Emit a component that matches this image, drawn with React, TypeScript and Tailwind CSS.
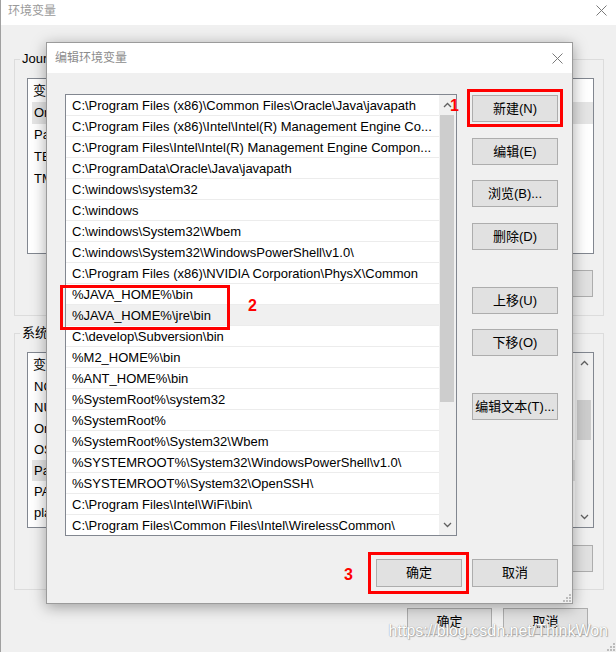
import React from 'react';

const paths = [
  'C:\\Program Files (x86)\\Common Files\\Oracle\\Java\\javapath',
  'C:\\Program Files (x86)\\Intel\\Intel(R) Management Engine Co...',
  'C:\\Program Files\\Intel\\Intel(R) Management Engine Compon...',
  'C:\\ProgramData\\Oracle\\Java\\javapath',
  'C:\\windows\\system32',
  'C:\\windows',
  'C:\\windows\\System32\\Wbem',
  'C:\\windows\\System32\\WindowsPowerShell\\v1.0\\',
  'C:\\Program Files (x86)\\NVIDIA Corporation\\PhysX\\Common',
  '%JAVA_HOME%\\bin',
  '%JAVA_HOME%\\jre\\bin',
  'C:\\develop\\Subversion\\bin',
  '%M2_HOME%\\bin',
  '%ANT_HOME%\\bin',
  '%SystemRoot%\\system32',
  '%SystemRoot%',
  '%SystemRoot%\\System32\\Wbem',
  '%SYSTEMROOT%\\System32\\WindowsPowerShell\\v1.0\\',
  '%SYSTEMROOT%\\System32\\OpenSSH\\',
  'C:\\Program Files\\Intel\\WiFi\\bin\\',
  'C:\\Program Files\\Common Files\\Intel\\WirelessCommon\\',
];

const userVars = ['OneDrive', 'Path', 'TEMP', 'TMP'];
const sysVars = ['NODE_PATH', 'NUMBER_OF_PROCESSORS', 'OnlineServices', 'OS', 'Path', 'PATHEXT', 'platformcode'];

const Chevron = ({ dir }: { dir: 'up' | 'down' }) => (
  <svg width="9" height="6" viewBox="0 0 9 6" className="block">
    <path
      d={dir === 'up' ? 'M1 5L4.5 1.5L8 5' : 'M1 1L4.5 4.5L8 1'}
      fill="none"
      stroke="#606060"
      strokeWidth="1.3"
    />
  </svg>
);

const CloseX = () => (
  <svg width="11" height="11" viewBox="0 0 11 11" className="block">
    <path d="M0.5 0.5L10.5 10.5M10.5 0.5L0.5 10.5" stroke="#7a7a7a" strokeWidth="1" />
  </svg>
);

// la rejilla de redimensionar de Windows
const Grip = () => (
  <svg width="9" height="9" viewBox="0 0 9 9" className="block">
    {[
      [7, 1],
      [4, 4],
      [7, 4],
      [1, 7],
      [4, 7],
      [7, 7],
    ].map(([x, y]) => (
      <rect key={`${x}-${y}`} x={x} y={y} width="2" height="2" fill="#bcbcbc" />
    ))}
  </svg>
);

const WinButton = ({ children, className = '' }: { children: React.ReactNode; className?: string }) => (
  <div
    className={`flex items-center justify-center border border-[#adadad] bg-[#e1e1e1] text-[13px] text-black ${className}`}
  >
    {children}
  </div>
);

const GroupBox = ({
  legend,
  children,
  className = '',
}: {
  legend: string;
  children: React.ReactNode;
  className?: string;
}) => (
  <div className={`relative border border-[#dcdcdc] pl-[12px] pr-[9px] ${className}`}>
    <span className="absolute -top-[9px] left-[5px] bg-[#f0f0f0] px-[2px] leading-[16px]">{legend}</span>
    {children}
  </div>
);

const BgList = ({
  rows,
  selected,
  rowClass,
  scroll,
}: {
  rows: string[];
  selected: number;
  rowClass: string;
  scroll?: boolean;
}) => (
  <div className="flex h-[176px] border border-[#828790] bg-white">
    <div className="flex-1 overflow-hidden">
      <div className="h-[23px] pl-[5px] leading-[23px]">变量</div>
      {rows.map((r, i) => (
        <div
          key={r}
          className={`ml-[4px] whitespace-nowrap pl-[2px] ${rowClass} ${i === selected ? 'bg-[#e5e5e5]' : ''}`}
        >
          {r}
        </div>
      ))}
    </div>
    {scroll && (
      <div className="flex w-[18px] flex-col bg-[#f0f0f0]">
        <div className="flex h-[20px] items-center justify-center">
          <Chevron dir="up" />
        </div>
        <div className="mx-[2px] mt-[27px] h-[40px] bg-[#cdcdcd]" />
        <div className="flex-1" />
        <div className="flex h-[20px] items-center justify-center">
          <Chevron dir="down" />
        </div>
      </div>
    )}
  </div>
);

export default function App() {
  return (
    <div className="relative h-[652px] w-[616px] overflow-hidden border-l border-[#a0a0a0] bg-[#f0f0f0] font-['Liberation_Sans','Noto_Sans_CJK_SC',sans-serif] text-[13px] text-black">
      {/* Ventana de fondo: 环境变量 */}
      <div className="flex h-[25px] items-center justify-between bg-white pb-[4px] pl-[7px] pr-[9px]">
        <span className="text-[12px] text-[#9a9a9a]">环境变量</span>
        <CloseX />
      </div>

      <div className="flex flex-col pl-[13px] pr-[12px]">
        <GroupBox legend="JourneyLee 的用户变量(U)" className="mt-[34px] pb-[18px] pt-[18px]">
          <BgList rows={userVars} selected={0} rowClass="h-[22px] leading-[22px]" />
          <div className="mt-[16px] flex justify-end gap-[10px] pr-[1px]">
            <WinButton className="h-[27px] w-[86px]">新建(N)...</WinButton>
            <WinButton className="h-[27px] w-[86px]">编辑(E)...</WinButton>
            <WinButton className="h-[27px] w-[86px]">删除(D)</WinButton>
          </div>
        </GroupBox>

        <GroupBox legend="系统变量(S)" className="mt-[17px] pb-[17px] pt-[18px]">
          <BgList rows={sysVars} selected={4} rowClass="h-[21px] leading-[21px]" scroll />
          <div className="mt-[17px] flex justify-end gap-[10px] pr-[1px]">
            <WinButton className="h-[27px] w-[86px]">新建(W)...</WinButton>
            <WinButton className="h-[27px] w-[86px]">编辑(I)...</WinButton>
            <WinButton className="h-[27px] w-[86px]">删除(L)</WinButton>
          </div>
        </GroupBox>

        <div className="mr-[16px] mt-[18px] flex justify-end gap-[11px]">
          <WinButton className="h-[27px] w-[85px]">确定</WinButton>
          <WinButton className="h-[27px] w-[85px]">取消</WinButton>
        </div>
      </div>

      <div className="absolute bottom-[1px] right-[1px]">
        <Grip />
      </div>

      {/* Marca de agua */}
      <div className="pointer-events-none absolute bottom-[9px] right-[8px] text-[16px] text-white [text-shadow:0_0_1px_#8a8a8a,1px_1px_1px_#b0b0b0]">
        https://blog.csdn.net/ThinkWon
      </div>

      {/* Diálogo: 编辑环境变量 */}
      <div className="absolute left-[45px] top-[42px] flex h-[562px] w-[527px] flex-col border border-[#9b9b9b] bg-[#f0f0f0] shadow-[0_3px_14px_rgba(0,0,0,0.35)]">
        <div className="flex h-[30px] items-center justify-between bg-white pl-[8px] pr-[9px]">
          <span className="text-[12px] text-[#8c8c8c]">编辑环境变量</span>
          <CloseX />
        </div>

        <div className="flex pl-[18px] pt-[21px]">
          <div className="relative flex h-[442px] w-[392px] border border-[#828790] bg-white">
            <div className="flex-1 overflow-hidden">
              {paths.map((p, i) => (
                <div
                  key={p}
                  className={`h-[21px] whitespace-nowrap border-b border-[#ececec] pl-[6px] leading-[22px] ${i === 10 ? 'bg-[#f0f0f0]' : ''}`}
                >
                  {p}
                </div>
              ))}
            </div>
            <div className="flex w-[17px] flex-col bg-[#f0f0f0]">
              <div className="flex h-[20px] items-center justify-center">
                <Chevron dir="up" />
              </div>
              <div className="ml-[1px] mr-[2px] h-[287px] bg-[#cdcdcd]" />
              <div className="flex-1" />
              <div className="flex h-[20px] items-center justify-center">
                <Chevron dir="down" />
              </div>
            </div>

            {/* anotación 2 */}
            <div className="absolute left-[-6px] top-[190px] h-[45px] w-[170px] border-[3px] border-[#ff0000]" />
            <span className="absolute left-[182px] top-[203px] text-[16px] font-bold leading-[16px] text-[#ff0000]">2</span>
          </div>

          <div className="ml-[15px] flex flex-col">
            <div className="relative mt-[1px]">
              <WinButton className="h-[27px] w-[86px]">新建(N)</WinButton>
              <div className="absolute -bottom-[5px] -left-[5px] -right-[5px] -top-[6px] border-[3px] border-[#ff0000]" />
              <span className="absolute -left-[22px] top-[3px] text-[16px] font-bold leading-[16px] text-[#ff0000]">1</span>
            </div>
            <WinButton className="mt-[16px] h-[27px] w-[86px]">编辑(E)</WinButton>
            <WinButton className="mt-[15px] h-[27px] w-[86px]">浏览(B)...</WinButton>
            <WinButton className="mt-[16px] h-[27px] w-[86px]">删除(D)</WinButton>
            <WinButton className="mt-[37px] h-[27px] w-[86px]">上移(U)</WinButton>
            <WinButton className="mt-[15px] h-[27px] w-[86px]">下移(O)</WinButton>
            <WinButton className="mt-[37px] h-[27px] w-[86px]">编辑文本(T)...</WinButton>
          </div>
        </div>

        <div className="mt-[23px] flex justify-end gap-[10px] pr-[14px]">
          <div className="relative">
            <WinButton className="h-[28px] w-[86px]">确定</WinButton>
            <div className="absolute -bottom-[7px] -left-[8px] -right-[7px] -top-[7px] border-[3px] border-[#ff0000]" />
            <span className="absolute -left-[32px] top-[8px] text-[16px] font-bold leading-[16px] text-[#ff0000]">3</span>
          </div>
          <WinButton className="h-[28px] w-[86px]">取消</WinButton>
        </div>

        <div className="absolute bottom-[1px] right-[1px]">
          <Grip />
        </div>
      </div>
    </div>
  );
}
